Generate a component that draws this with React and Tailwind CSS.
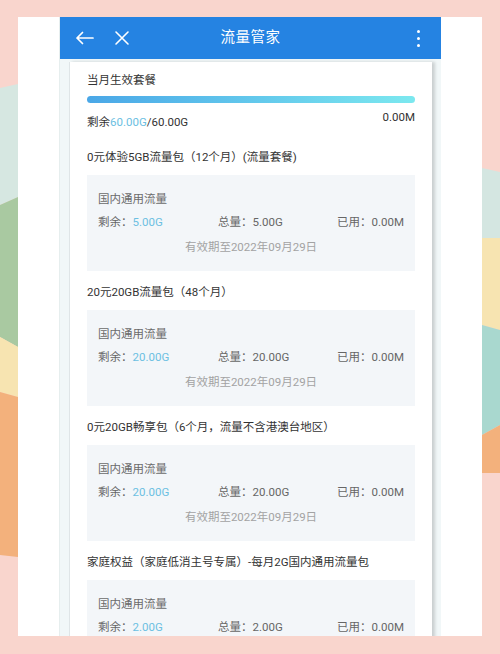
const SECTIONS = [
  { title: "0元体验5GB流量包（12个月）(流量套餐)", left: "5.00G", total: "5.00G" },
  { title: "20元20GB流量包（48个月）", left: "20.00G", total: "20.00G" },
  { title: "0元20GB畅享包（6个月，流量不含港澳台地区）", left: "20.00G", total: "20.00G" },
  { title: "家庭权益（家庭低消主号专属）-每月2G国内通用流量包", left: "2.00G", total: "2.00G", cut: true },
];

function Backdrop() {
  return (
    <svg className="absolute inset-0" width="500" height="654" viewBox="0 0 500 654">
      <rect width="500" height="654" fill="#f9d5cd" />
      {/* left waves */}
      <polygon points="0,88 18,84 18,197 0,205" fill="#d6e7e1" />
      <polygon points="0,205 18,197 18,347 0,337" fill="#a9c9a1" />
      <polygon points="0,337 18,347 18,397 0,392" fill="#f7e4b1" />
      <polygon points="0,392 18,397 18,557 0,555" fill="#f3b17c" />
      {/* right waves */}
      <polygon points="482,168 500,172 500,238 482,238" fill="#d4e6e1" />
      <polygon points="482,238 500,238 500,330 482,325" fill="#f7e4b1" />
      <polygon points="482,325 500,330 500,425 482,435" fill="#a9d8cf" />
      <polygon points="482,435 500,425 500,473 482,473" fill="#f3b17c" />
    </svg>
  );
}

function Header() {
  return (
    <div className="h-[42px] shrink-0 bg-[#2583e2] flex items-center relative text-white">
      <svg className="ml-[15px]" width="19" height="14" viewBox="0 0 19 14" fill="none" stroke="white" strokeWidth="1.7" strokeLinecap="round" strokeLinejoin="round">
        <path d="M18 7H2M7.5 1.5L2 7l5.5 5.5" />
      </svg>
      <svg className="ml-[20px]" width="16" height="16" viewBox="0 0 16 16" fill="none" stroke="white" strokeWidth="1.6" strokeLinecap="round">
        <path d="M2 2l12 12M14 2L2 14" />
      </svg>
      <div className="absolute inset-0 flex items-center justify-center text-[14.5px] tracking-[0.5px] pointer-events-none">
        流量管家
      </div>
      <div className="ml-auto mr-[21px] flex flex-col gap-[4px]">
        <span className="w-[3px] h-[3px] rounded-full bg-white" />
        <span className="w-[3px] h-[3px] rounded-full bg-white" />
        <span className="w-[3px] h-[3px] rounded-full bg-white" />
      </div>
    </div>
  );
}

function PackBox({ left, total, cut }) {
  return (
    <div className="bg-[#f3f6f9] px-[11px] pt-[15px] pb-[15px] text-[11.5px] leading-[18px]">
      <div className="text-[#6b6b6b]">国内通用流量</div>
      <div className="flex mt-[5px] text-[#666]">
        <div className="w-[120px]">
          剩余：<span className="text-[#6cc0e2]">{left}</span>
        </div>
        <div className="flex-1">总量：{total}</div>
        <div>已用：0.00M</div>
      </div>
      {!cut && (
        <div className="mt-[7px] text-center text-[#a3a3a3]">有效期至2022年09月29日</div>
      )}
    </div>
  );
}

export default function App() {
  return (
    <div className="relative w-[500px] h-[654px] overflow-hidden font-['Roboto','Noto_Sans_CJK_SC',sans-serif]">
      <Backdrop />
      <div className="relative mt-[17px] ml-[18px] w-[464px] h-[619px] bg-white overflow-hidden">
        <div className="ml-[41px] w-[382px] min-h-full bg-[#f1f7f8] border-l border-[#e6eeee] flex flex-col">
          <Header />
          <div className="mt-[3px] ml-[9px] w-[363px] grow shrink-0 bg-white border-l border-[#dfe5e7] shadow-[3px_0_3px_rgba(0,0,0,0.16)] px-[17px] pt-[9px] pb-[20px] text-[#333]">
            <div className="text-[11.5px] leading-[18px]">当月生效套餐</div>
            <div className="mt-[7px] h-[7px] rounded-full bg-linear-to-r from-[#4aa7e7] to-[#7ce8ef]" />
            <div className="mt-[5px] flex justify-between text-[11.5px] leading-[18px]">
              <div className="pt-[5px]">
                剩余<span className="text-[#6cc0e2]">60.00G</span>/60.00G
              </div>
              <div>0.00M</div>
            </div>
            <div className="mt-[17px] flex flex-col">
              {SECTIONS.map((s, i) => (
                <div key={i} className={i > 0 ? "mt-[12px]" : ""}>
                  <div className="text-[11.5px] leading-[18px] mb-[9px]">{s.title}</div>
                  <PackBox left={s.left} total={s.total} cut={s.cut} />
                </div>
              ))}
            </div>
          </div>
        </div>
      </div>
    </div>
  );
}
